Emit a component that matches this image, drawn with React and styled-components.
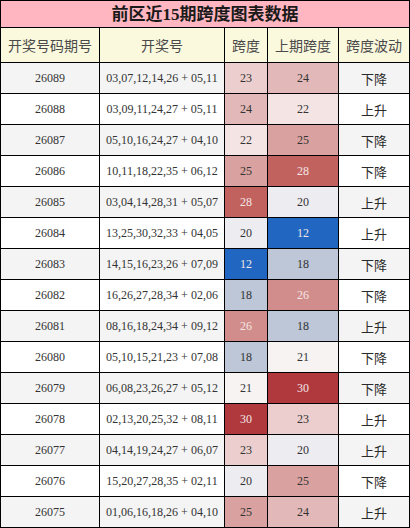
import React from "react";
import styled, { createGlobalStyle } from "styled-components";

const Global = createGlobalStyle`
  html, body { margin: 0; padding: 0; background: #fff; }
  body { font-family: "Liberation Serif", "Noto Sans CJK SC", serif; }
`;

const rows = [
  ["26089", "03,07,12,14,26 + 05,11", 23, 24, "下降"],
  ["26088", "03,09,11,24,27 + 05,11", 24, 22, "上升"],
  ["26087", "05,10,16,24,27 + 04,10", 22, 25, "下降"],
  ["26086", "10,11,18,22,35 + 06,12", 25, 28, "下降"],
  ["26085", "03,04,14,28,31 + 05,07", 28, 20, "上升"],
  ["26084", "13,25,30,32,33 + 04,05", 20, 12, "上升"],
  ["26083", "14,15,16,23,26 + 07,09", 12, 18, "下降"],
  ["26082", "16,26,27,28,34 + 02,06", 18, 26, "下降"],
  ["26081", "08,16,18,24,34 + 09,12", 26, 18, "上升"],
  ["26080", "05,10,15,21,23 + 07,08", 18, 21, "下降"],
  ["26079", "06,08,23,26,27 + 05,12", 21, 30, "下降"],
  ["26078", "02,13,20,25,32 + 08,11", 30, 23, "上升"],
  ["26077", "04,14,19,24,27 + 06,07", 23, 20, "上升"],
  ["26076", "15,20,27,28,35 + 02,11", 20, 25, "下降"],
  ["26075", "01,06,16,18,26 + 04,10", 25, 24, "上升"],
];

const heat = {
  12: "#2166c0",
  18: "#bdc7d8",
  20: "#edecf0",
  21: "#f8f3f3",
  22: "#f5e4e4",
  23: "#ebcecd",
  24: "#e2b9b8",
  25: "#d9a2a0",
  26: "#d18d8b",
  28: "#c1625f",
  30: "#b0393e",
};
const lightText = new Set([12, 26, 28, 30]);

const Sheet = styled.div`
  display: grid;
  grid-template-columns: 98px 124px 42px 70px 70px;
  grid-template-rows: 26px 34px repeat(15, 30px);
  gap: 1px;
  padding: 1px;
  width: 410px;
  height: 528px;
  box-sizing: border-box;
  background: #000;
`;

const Title = styled.div`
  grid-column: 1 / -1;
  display: flex;
  align-items: center;
  justify-content: center;
  background: #ffb6c1;
  color: #1a1a1a;
  font-weight: bold;
  font-size: 17px;
  line-height: 1;
  font-family: "Liberation Serif", "Noto Sans CJK SC", serif;
`;

const Head = styled.div`
  display: flex;
  align-items: center;
  justify-content: center;
  background: #faf8dd;
  color: #4a4a4a;
  font-size: 14px;
  line-height: 1;
  font-family: "Noto Sans CJK SC", sans-serif;
`;

const Cell = styled.div`
  display: flex;
  align-items: center;
  justify-content: center;
  background: ${(p) => p.$bg};
  color: ${(p) => p.$fg || "#333"};
  font-size: 12px;
  font-family: "Liberation Serif", serif;
`;

const Trend = styled(Cell)`
  font-size: 13px;
  line-height: 1;
  color: #2a2a2a;
  font-family: "Noto Sans CJK SC", sans-serif;
`;

export default function App() {
  return (
    <>
      <Global />
      <Sheet>
        <Title>前区近15期跨度图表数据</Title>
        <Head>开奖号码期号</Head>
        <Head>开奖号</Head>
        <Head>跨度</Head>
        <Head>上期跨度</Head>
        <Head>跨度波动</Head>
        {rows.map(([issue, nums, span, prev, dir], i) => {
          const base = i % 2 === 0 ? "#f4f4f4" : "#ffffff";
          return (
            <React.Fragment key={issue}>
              <Cell $bg={base}>{issue}</Cell>
              <Cell $bg={base}>{nums}</Cell>
              <Cell $bg={heat[span]} $fg={lightText.has(span) ? "#f3e6e6" : "#333"}>
                {span}
              </Cell>
              <Cell $bg={heat[prev]} $fg={lightText.has(prev) ? "#f3e6e6" : "#333"}>
                {prev}
              </Cell>
              <Trend $bg={base}>{dir}</Trend>
            </React.Fragment>
          );
        })}
      </Sheet>
    </>
  );
}
